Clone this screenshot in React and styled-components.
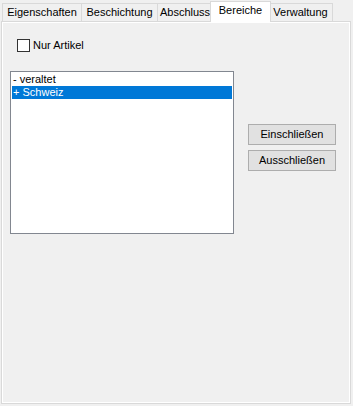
import React from "react";
import styled, { createGlobalStyle } from "styled-components";

const GlobalStyle = createGlobalStyle`
  html, body {
    margin: 0;
    padding: 0;
    background: #f0f0f0;
  }
  body {
    font-family: "Liberation Sans", Arial, sans-serif;
    font-size: 11px;
    color: #000;
  }
`;

const Window = styled.div`
  width: 353px;
  height: 406px;
  padding-left: 1px;
  box-sizing: border-box;
`;

const TabStrip = styled.div`
  display: flex;
  align-items: flex-end;
  height: 21px;
  padding-left: 1px;
`;

const Tab = styled.div`
  position: relative;
  box-sizing: border-box;
  width: ${(p) => p.$width}px;
  height: ${(p) => (p.$active ? 21 : 18)}px;
  margin-left: ${(p) => p.$offset ?? -1}px;
  margin-bottom: ${(p) => (p.$active ? -1 : 0)}px;
  padding-top: 2px;
  border: 1px solid #d9d9d9;
  border-bottom: none;
  background: ${(p) => (p.$active ? "#fff" : "#f0f0f0")};
  z-index: ${(p) => (p.$active ? 2 : 1)};
  text-align: center;
  line-height: 13px;
  white-space: nowrap;
`;

const Panel = styled.div`
  box-sizing: border-box;
  width: 350px;
  height: 383px;
  border: 1px solid #d9d9d9;
  box-shadow: inset 0 0 0 1px #fff;
  background: #f0f0f0;
  padding: 17px 0 0 8px;
`;

const CheckRow = styled.label`
  display: flex;
  align-items: center;
  gap: 3px;
  margin-left: 7px;
  height: 13px;
  line-height: 13px;
`;

const CheckBox = styled.span`
  box-sizing: border-box;
  width: 13px;
  height: 13px;
  border: 1px solid #333;
  background: #fff;
`;

const Body = styled.div`
  display: flex;
  align-items: flex-start;
  margin-top: 19px;
`;

const ListBox = styled.div`
  box-sizing: border-box;
  width: 224px;
  height: 163px;
  border: 1px solid #828790;
  background: #fff;
  padding: 1px;
`;

const ListItem = styled.div`
  height: 13px;
  line-height: 13px;
  padding-left: 1px;
  white-space: nowrap;
  background: ${(p) => (p.$selected ? "#0078d7" : "transparent")};
  color: ${(p) => (p.$selected ? "#fff" : "#000")};
`;

const ButtonColumn = styled.div`
  display: flex;
  flex-direction: column;
  gap: 5px;
  margin: 53px 0 0 14px;
`;

const Button = styled.button`
  box-sizing: border-box;
  width: 88px;
  height: 21px;
  padding: 0;
  border: 1px solid #adadad;
  background: #e1e1e1;
  font-family: "Liberation Sans", Arial, sans-serif;
  font-size: 11px;
  color: #000;
  line-height: 13px;
`;

const tabs = [
  { label: "Eigenschaften", width: 80, offset: 0 },
  { label: "Beschichtung", width: 77 },
  { label: "Abschluss", width: 56 },
  { label: "Bereiche", width: 61, offset: -3, active: true },
  { label: "Verwaltung", width: 65, offset: -3 },
];

export default function App() {
  return (
    <Window>
      <GlobalStyle />
      <TabStrip>
        {tabs.map((t) => (
          <Tab key={t.label} $width={t.width} $offset={t.offset} $active={t.active}>
            {t.label}
          </Tab>
        ))}
      </TabStrip>
      <Panel>
        <CheckRow>
          <CheckBox />
          Nur Artikel
        </CheckRow>
        <Body>
          <ListBox>
            <ListItem>- veraltet</ListItem>
            <ListItem $selected>+ Schweiz</ListItem>
          </ListBox>
          <ButtonColumn>
            <Button>Einschließen</Button>
            <Button>Ausschließen</Button>
          </ButtonColumn>
        </Body>
      </Panel>
    </Window>
  );
}
